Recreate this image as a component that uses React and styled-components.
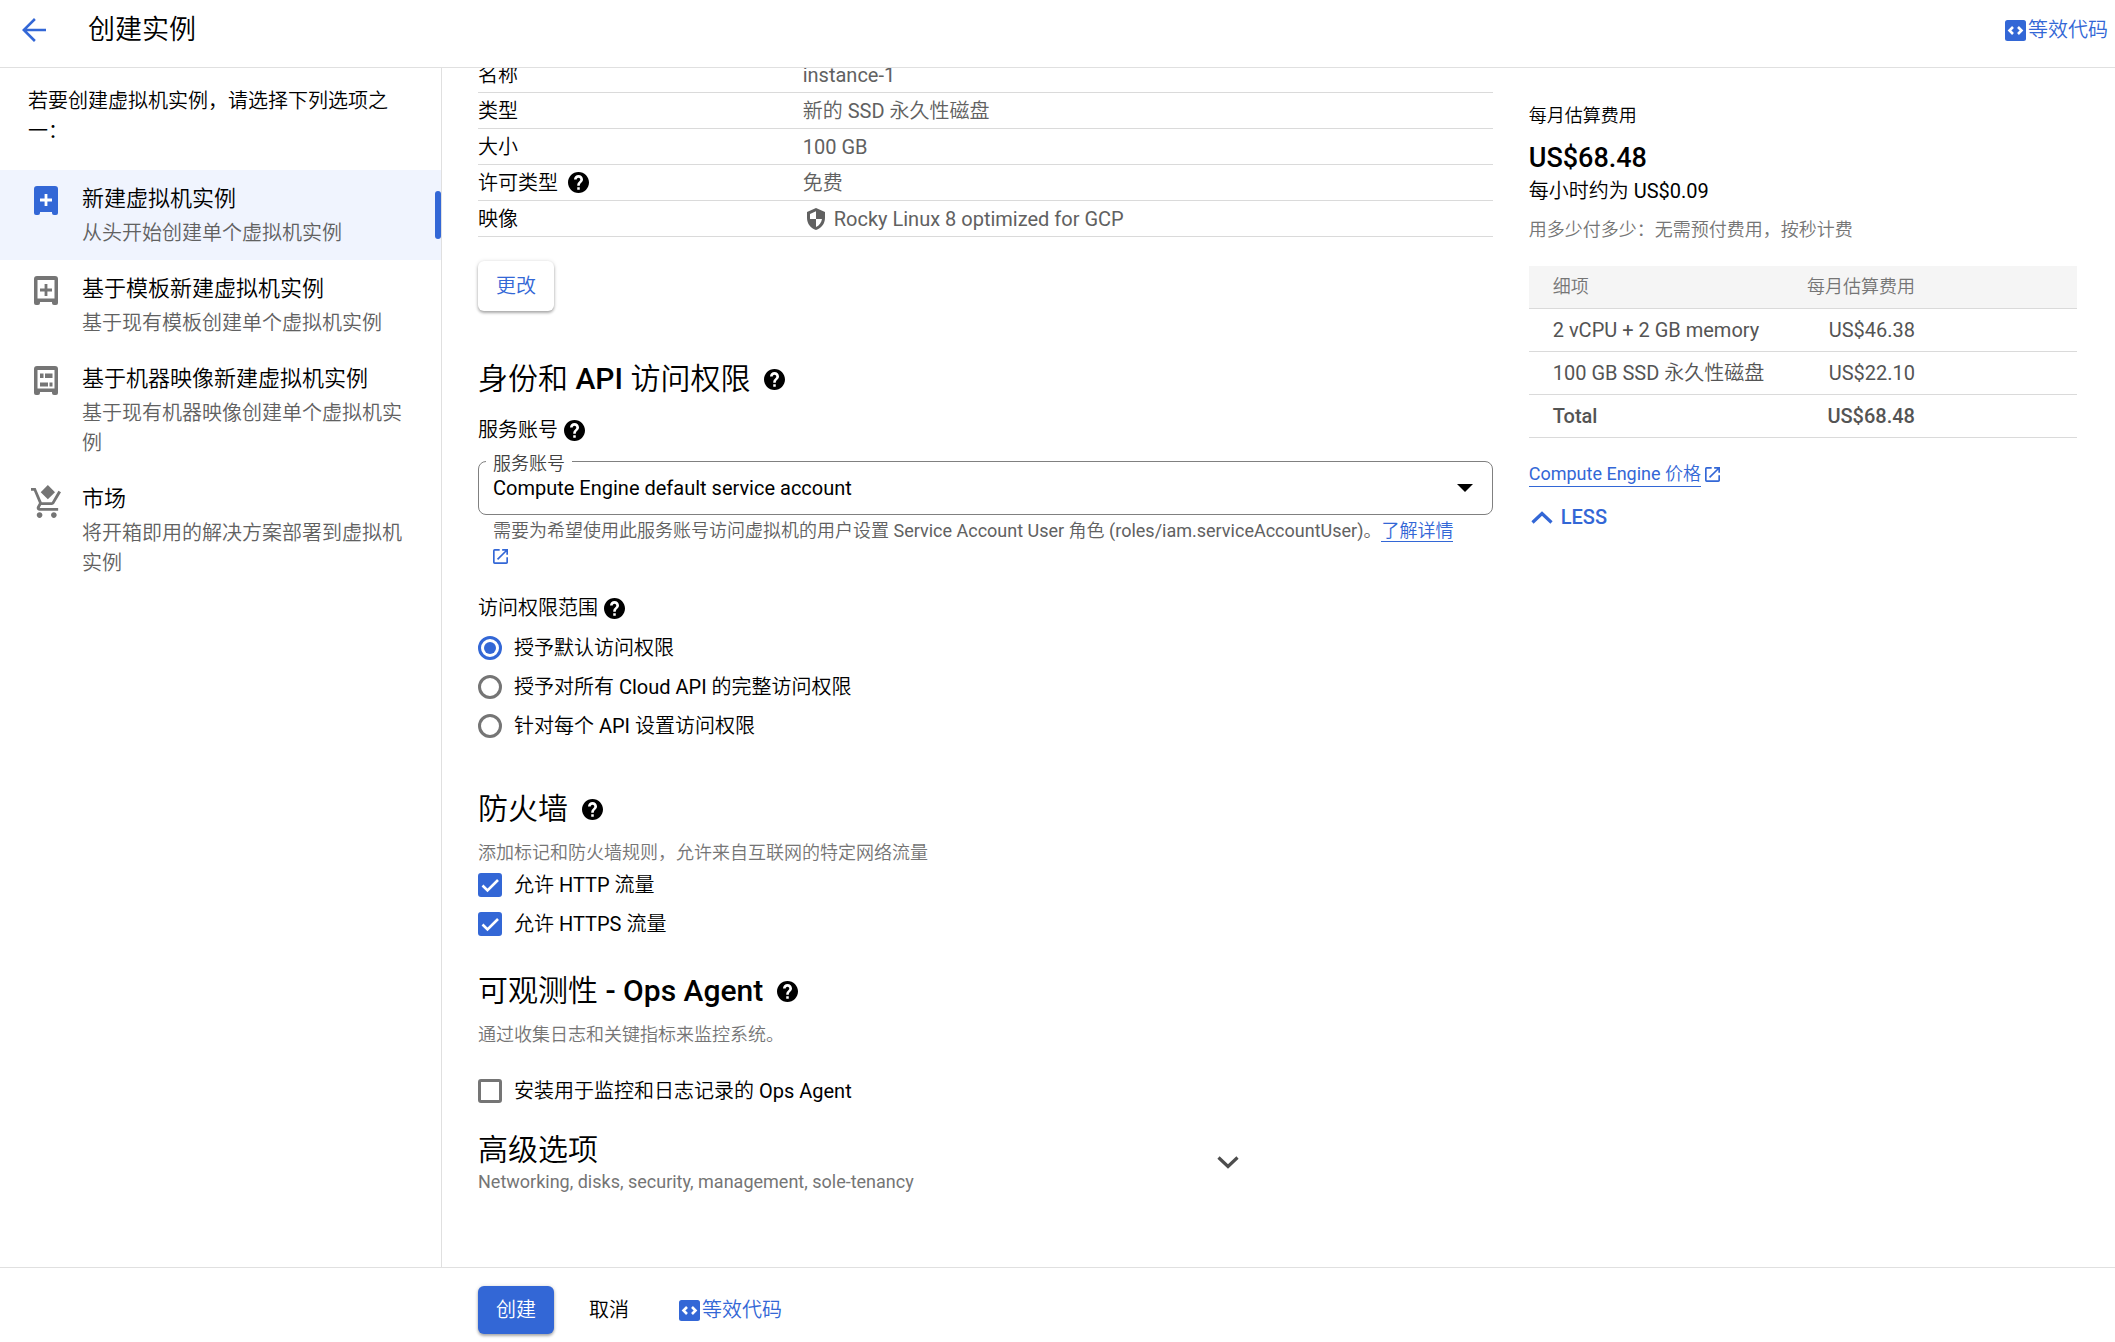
import React, { useLayoutEffect, useRef, useState } from "react";
import styled, { createGlobalStyle } from "styled-components";

const GlobalStyle = createGlobalStyle`
  * {
    box-sizing: border-box;
  }

  body {
    margin: 0;
    background: #fff;
    color: #000;
    font-family: Roboto, "Noto Sans CJK SC DemiLight", "Noto Sans CJK SC", sans-serif;
    font-size: 20px;
    line-height: 30px;
  }

  button, input, select {
    margin: 0;
    font: inherit;
    color: inherit;
  }

  h1, h2, p {
    margin: 0;
  }
`;

const CREATE_OPTIONS = [
  { id: "new", title: "新建虚拟机实例", text: "从头开始创建单个虚拟机实例" },
  {
    id: "template",
    title: "基于模板新建虚拟机实例",
    text: "基于现有模板创建单个虚拟机实例",
  },
  {
    id: "image",
    title: "基于机器映像新建虚拟机实例",
    text: "基于现有机器映像创建单个虚拟机实例",
  },
  { id: "market", title: "市场", text: "将开箱即用的解决方案部署到虚拟机实例" },
];

const SCOPES = [
  { id: "default", label: "授予默认访问权限" },
  { id: "full", label: "授予对所有 Cloud API 的完整访问权限" },
  { id: "custom", label: "针对每个 API 设置访问权限" },
];

const COSTS = [
  { item: "2 vCPU + 2 GB memory", price: "US$46.38" },
  { item: "100 GB SSD 永久性磁盘", price: "US$22.10" },
];

// Icons
const BackIcon = () => (
  <svg width="24" height="24" viewBox="4 4 16 16" fill="currentColor">
    <path d="M20 11.2H7.3l5.9-5.9L12 4l-8 8 8 8 1.2-1.3-5.9-5.9H20z" />
  </svg>
);

const CodeIcon = () => (
  <svg width="21" height="21" viewBox="0 0 21 21">
    <rect width="21" height="21" rx="2.5" fill="currentColor" />
    <path
      d="M8 7l-3.5 3.5L8 14M13 7l3.5 3.5L13 14"
      fill="none"
      stroke="#fff"
      strokeWidth="2.6"
    />
  </svg>
);

const HelpIcon = () => (
  <svg width="21" height="21" viewBox="2 2 20 20" fill="currentColor">
    <path d="M12 2C6.48 2 2 6.48 2 12s4.48 10 10 10 10-4.48 10-10S17.52 2 12 2zm1.2 17h-2.4v-2.4h2.4V19zm2.07-7.55l-.9.92c-.72.73-1.17 1.33-1.17 2.83h-2.4v-.7c0-1.1.45-2.1 1.17-2.83l1.24-1.26c.37-.36.49-.76.49-1.31 0-.9-.8-1.7-1.7-1.7s-1.7.8-1.7 1.7H7.7C7.7 6.69 9.59 4.8 12 4.8s4.3 1.89 4.3 4.3c0 .88-.46 1.78-1.03 2.35z" />
  </svg>
);

const ShieldIcon = () => (
  <svg width="18" height="22" viewBox="3 1 18 22" fill="currentColor">
    <path d="M12 1L3 5v6c0 5.55 3.84 10.74 9 12 5.16-1.26 9-6.45 9-12V5l-9-4zm0 10.99h6c-.5 3.6-2.8 6.7-6 7.9V12H6V7l6-2.7z" />
  </svg>
);

const OpenIcon = () => (
  <svg width="15" height="15" viewBox="3 3 18 18" fill="currentColor">
    <path d="M19 19H5V5h6V3H5a2 2 0 00-2 2v14a2 2 0 002 2h14c1.1 0 2-.9 2-2v-6h-2v6zM14 3v2h3.59l-9.83 9.83 1.41 1.41L19 6.41V10h2V3h-7z" />
  </svg>
);

const ChevronIcon = ({ up }) => (
  <svg width="22" height="13" viewBox="0 0 22 13">
    <path
      d={up ? "M1.5 11.5l9.5-9 9.5 9" : "M1.5 1.5l9.5 9 9.5-9"}
      fill="none"
      stroke="currentColor"
      strokeWidth="3.2"
    />
  </svg>
);

const OptionIcon = ({ id }) => {
  if (id === "market") {
    return (
      <svg width="30" height="33" viewBox="1 -1 21 23" fill="currentColor">
        <path d="M12.8-1l5 5-5 5-5-5zM7 18c-1.1 0-1.99.9-1.99 2S5.9 22 7 22s2-.9 2-2-.9-2-2-2zm10 0c-1.1 0-1.99.9-1.99 2s.89 2 1.99 2 2-.9 2-2-.9-2-2-2zm-9.83-3.25l.03-.12.9-1.63h7.45c.75 0 1.41-.41 1.75-1.03l4.7-7.97L20.2 3l-4.65 8H8.53L4.27 1H1v2h2l3.6 8.59-1.35 2.45c-.16.28-.25.61-.25.96 0 1.1.9 2 2 2h13v-2H7.42c-.13 0-.25-.11-.25-.25z" />
      </svg>
    );
  }
  return (
    <svg width="24" height="30" viewBox="0 0 24 30" fill="currentColor">
      <path d="M3 0h18a3 3 0 013 3v24a2 2 0 01-2 2h-2a2 2 0 01-2-2v-1H6v1a2 2 0 01-2 2H2a2 2 0 01-2-2V3a3 3 0 013-3z" />
      {id !== "new" && <path d="M3.5 4h17v18.5h-17z" fill="#fff" />}
      {id === "image" ? (
        <path d="M6 7.5h3.5V12H6zM11 7.5h7.5V12H11zM6 16.5h8v4H6zM15.5 16.5h3v4h-3z" />
      ) : (
        <path
          d="M12 8v12M6 14h12"
          stroke={id === "new" ? "#fff" : "currentColor"}
          strokeWidth="2.8"
        />
      )}
    </svg>
  );
};

export default function App() {
  const pane = useRef(null);
  const [scope, setScope] = useState("default");
  const [http, setHttp] = useState(true);
  const [https, setHttps] = useState(true);
  const [opsAgent, setOpsAgent] = useState(false);

  // Open the form just past the top of the boot disk table
  useLayoutEffect(() => {
    pane.current.scrollTop = 11;
  }, []);

  return (
    <Page lang="zh-CN">
      <GlobalStyle />
      <TopBar>
        <IconButton type="button" aria-label="返回">
          <BackIcon />
        </IconButton>
        <PageTitle>创建实例</PageTitle>
        <CodeButton type="button">
          <CodeIcon />
          等效代码
        </CodeButton>
      </TopBar>

      <Body>
        <Sidebar>
          <Intro>若要创建虚拟机实例，请选择下列选项之一：</Intro>
          <nav>
            {CREATE_OPTIONS.map((option) => (
              <Option
                key={option.id}
                href={`#${option.id}`}
                $active={option.id === "new"}
              >
                <OptionIconBox $active={option.id === "new"}>
                  <OptionIcon id={option.id} />
                </OptionIconBox>
                <OptionBody>
                  <OptionTitle>{option.title}</OptionTitle>
                  <OptionText>{option.text}</OptionText>
                </OptionBody>
              </Option>
            ))}
          </nav>
        </Sidebar>

        <FormPane ref={pane}>
          <DiskTable>
            <tbody>
              <tr>
                <th scope="row">名称</th>
                <td>instance-1</td>
              </tr>
              <tr>
                <th scope="row">类型</th>
                <td>新的 SSD 永久性磁盘</td>
              </tr>
              <tr>
                <th scope="row">大小</th>
                <td>100 GB</td>
              </tr>
              <tr>
                <th scope="row">
                  <TermLabel>
                    许可类型
                    <HelpIcon />
                  </TermLabel>
                </th>
                <td>免费</td>
              </tr>
              <tr>
                <th scope="row">映像</th>
                <td>
                  <ImageName>
                    <ShieldIcon />
                    Rocky Linux 8 optimized for GCP
                  </ImageName>
                </td>
              </tr>
            </tbody>
          </DiskTable>
          <ChangeButton type="button">更改</ChangeButton>

          <Heading $top={48}>
            身份和 API 访问权限
            <HelpIcon />
          </Heading>
          <Label $top={16}>
            服务账号
            <HelpIcon />
          </Label>
          <SelectField>
            <label htmlFor="account">服务账号</label>
            <select id="account" defaultValue="default">
              <option value="default">
                Compute Engine default service account
              </option>
            </select>
            <svg width="16" height="8" viewBox="0 0 16 8">
              <path d="M0 0h16L8 8z" />
            </svg>
          </SelectField>
          <Helper>
            需要为希望使用此服务账号访问虚拟机的用户设置 Service Account User
            角色 (roles/iam.serviceAccountUser)。
            <Link href="#learn">了解详情</Link> <OpenIcon />
          </Helper>

          <Label $top={26}>
            访问权限范围
            <HelpIcon />
          </Label>
          <Choices $top={5}>
            {SCOPES.map((item) => (
              <Choice key={item.id}>
                <Radio
                  type="radio"
                  name="scope"
                  checked={scope === item.id}
                  onChange={() => setScope(item.id)}
                />
                {item.label}
              </Choice>
            ))}
          </Choices>

          <Heading $top={44}>
            防火墙
            <HelpIcon />
          </Heading>
          <Description $top={12}>
            添加标记和防火墙规则，允许来自互联网的特定网络流量
          </Description>
          <Choices>
            <CheckChoice checked={http} onChange={setHttp}>
              允许 HTTP 流量
            </CheckChoice>
            <CheckChoice checked={https} onChange={setHttps}>
              允许 HTTPS 流量
            </CheckChoice>
          </Choices>

          <Heading $top={28}>
            可观测性 - Ops Agent
            <HelpIcon />
          </Heading>
          <Description $top={12}>通过收集日志和关键指标来监控系统。</Description>
          <Choices $top={24}>
            <CheckChoice checked={opsAgent} onChange={setOpsAgent}>
              安装用于监控和日志记录的 Ops Agent
            </CheckChoice>
          </Choices>

          <Advanced type="button" aria-expanded="false">
            <span>
              <AdvancedTitle>高级选项</AdvancedTitle>
              <AdvancedText>
                Networking, disks, security, management, sole-tenancy
              </AdvancedText>
            </span>
            <ChevronIcon />
          </Advanced>
        </FormPane>

        <CostPane>
          <CostLabel>每月估算费用</CostLabel>
          <Price>US$68.48</Price>
          <p>每小时约为 US$0.09</p>
          <Description $top={12}>
            用多少付多少：无需预付费用，按秒计费
          </Description>
          <CostTable>
            <colgroup>
              <col />
              <col width="30%" />
              <col width="162" />
            </colgroup>
            <thead>
              <tr>
                <th scope="col">细项</th>
                <th scope="col">每月估算费用</th>
                <td />
              </tr>
            </thead>
            <tbody>
              {COSTS.map((cost) => (
                <tr key={cost.item}>
                  <td>{cost.item}</td>
                  <td>{cost.price}</td>
                  <td />
                </tr>
              ))}
            </tbody>
            <tfoot>
              <tr>
                <td>Total</td>
                <td>US$68.48</td>
                <td />
              </tr>
            </tfoot>
          </CostTable>
          <PricingRow>
            <Link href="#pricing">Compute Engine 价格</Link>
            <OpenIcon />
          </PricingRow>
          <LessButton type="button">
            <ChevronIcon up />
            LESS
          </LessButton>
        </CostPane>
      </Body>

      <Footer>
        <CreateButton type="button">创建</CreateButton>
        <CancelButton type="button">取消</CancelButton>
        <CodeButton type="button">
          <CodeIcon />
          等效代码
        </CodeButton>
      </Footer>
    </Page>
  );
}

function CheckChoice({ checked, onChange, children }) {
  return (
    <Choice>
      <CheckStack>
        <Checkbox
          type="checkbox"
          checked={checked}
          onChange={(e) => onChange(e.target.checked)}
        />
        {checked && (
          <svg width="24" height="24" viewBox="0 0 24 24">
            <path
              d="M4.5 12.5l5 5L20 7"
              fill="none"
              stroke="#fff"
              strokeWidth="2.6"
            />
          </svg>
        )}
      </CheckStack>
      {children}
    </Choice>
  );
}

const Page = styled.div`
  display: flex;
  flex-direction: column;
  height: 100vh;
`;

const TopBar = styled.header`
  display: flex;
  flex: none;
  align-items: center;
  padding: 0 7px 7px 22px;
  height: 68px;
  border-bottom: 1px solid #e0e0e0;
`;

const PlainButton = styled.button`
  display: flex;
  align-items: center;
  padding: 0;
  border: 0;
  background: none;
  cursor: pointer;
`;

const IconButton = styled(PlainButton)`
  color: #3367d6;
`;

const PageTitle = styled.h1`
  flex: 1;
  margin-left: 42px;
  font-size: 27px;
  font-weight: 400;
  line-height: 40px;
`;

const CodeButton = styled(PlainButton)`
  gap: 2px;
  color: #3367d6;
`;

const Body = styled.div`
  display: grid;
  grid-template-columns: 442px minmax(0, 16fr) minmax(0, 9fr);
  grid-template-rows: minmax(0, 1fr);
  flex: 1;
  min-height: 0;
`;

const Sidebar = styled.aside`
  border-right: 1px solid #e0e0e0;
`;

const Intro = styled.p`
  padding: 18px 28px 24px;
`;

const Option = styled.a`
  position: relative;
  display: flex;
  gap: 20px;
  padding: 14px 28px 12px 30px;
  background: ${(props) => (props.$active ? "#f0f4fe" : "none")};
  color: inherit;
  text-decoration: none;

  &::after {
    content: "";
    display: ${(props) => (props.$active ? "block" : "none")};
    position: absolute;
    top: 21px;
    right: 0;
    width: 6px;
    height: 48px;
    border-radius: 3px;
    background: #3367d6;
  }
`;

const OptionIconBox = styled.span`
  display: flex;
  flex: none;
  justify-content: center;
  align-items: center;
  width: 32px;
  height: 34px;
  color: ${(props) => (props.$active ? "#3367d6" : "#757575")};
`;

const OptionBody = styled.span`
  display: flex;
  flex-direction: column;
  gap: 4px;
`;

const OptionTitle = styled.span`
  font-size: 22px;
`;

const OptionText = styled.span`
  color: #616161;
`;

const FormPane = styled.main`
  padding: 0 20px 80px 36px;
  overflow-y: auto;
  scrollbar-width: none;
`;

const DiskTable = styled.table`
  width: 100%;
  border-collapse: separate;
  border-spacing: 0;
  table-layout: fixed;

  th,
  td {
    height: 36px;
    padding: 0;
    border-bottom: 1px solid #dadada;
    font-weight: 400;
    text-align: left;
  }

  th {
    width: 32%;
  }

  td {
    color: #616161;
  }
`;

const TermLabel = styled.span`
  display: flex;
  align-items: center;
  gap: 10px;
`;

const ImageName = styled.span`
  display: flex;
  align-items: center;
  gap: 9px;
  padding-left: 4px;
`;

const ChangeButton = styled.button`
  display: block;
  height: 50px;
  margin-top: 24px;
  padding: 0 18px;
  border: 0;
  border-radius: 6px;
  background: #fff;
  box-shadow: 0 2px 3px rgba(0, 0, 0, 0.3), 0 0 4px rgba(0, 0, 0, 0.12);
  color: #3367d6;
`;

const Heading = styled.h2`
  display: flex;
  align-items: center;
  gap: 14px;
  margin-top: ${(props) => props.$top}px;
  font-size: 30px;
  font-weight: 500;
  line-height: 40px;
`;

const Label = styled.div`
  display: flex;
  align-items: center;
  gap: 6px;
  margin-top: ${(props) => props.$top}px;
`;

const SelectField = styled.div`
  position: relative;
  display: grid;
  align-items: center;
  margin-top: 16px;

  label {
    position: absolute;
    top: -9px;
    left: 8px;
    padding: 0 7px;
    background: #fff;
    color: #424242;
    font-size: 18px;
    line-height: 24px;
  }

  select {
    grid-area: 1 / 1;
    width: 100%;
    height: 54px;
    padding: 0 48px 0 14px;
    border: 1px solid #808080;
    border-radius: 8px;
    background: #fff;
    appearance: none;
  }

  svg {
    grid-area: 1 / 1;
    justify-self: end;
    margin-right: 20px;
    pointer-events: none;
  }
`;

const Helper = styled.p`
  margin-top: 4px;
  padding: 0 26px 0 15px;
  color: #616161;
  font-size: 18px;
  line-height: 24px;

  svg {
    color: #3367d6;
    vertical-align: middle;
  }
`;

const Link = styled.a`
  border-bottom: 1px solid #3367d6;
  color: #3367d6;
  text-decoration: none;
`;

const Choices = styled.div`
  display: grid;
  grid-auto-rows: 39px;
  justify-items: start;
  margin-top: ${(props) => props.$top || 0}px;
`;

const Choice = styled.label`
  display: flex;
  align-items: center;
  gap: 12px;
`;

const Radio = styled.input`
  width: 24px;
  height: 24px;
  border: 3px solid #757575;
  border-radius: 50%;
  appearance: none;

  &:checked {
    border-color: #3367d6;
    padding: 3px;
    background: #3367d6 content-box;
  }
`;

const CheckStack = styled.span`
  display: grid;

  > * {
    grid-area: 1 / 1;
  }

  svg {
    pointer-events: none;
  }
`;

const Checkbox = styled.input`
  width: 24px;
  height: 24px;
  border: 3px solid #757575;
  border-radius: 3px;
  appearance: none;

  &:checked {
    border-color: #3367d6;
    background: #3367d6;
  }
`;

const Description = styled.p`
  margin-top: ${(props) => props.$top}px;
  color: #757575;
  font-size: 18px;
  line-height: 24px;
`;

const Advanced = styled(PlainButton)`
  justify-content: space-between;
  width: 75%;
  margin-top: 20px;
  color: #4d4d4d;
  text-align: left;
`;

const AdvancedTitle = styled.span`
  display: block;
  color: #000;
  font-size: 30px;
  font-weight: 500;
  line-height: 40px;
`;

const AdvancedText = styled.span`
  display: block;
  color: #757575;
  font-size: 18px;
  line-height: 24px;
`;

const CostPane = styled.aside`
  padding: 36px 38px 0 16px;
`;

const CostLabel = styled.p`
  font-size: 18px;
  line-height: 24px;
`;

const Price = styled.p`
  margin-top: 12px;
  font-size: 27px;
  font-weight: 500;
  line-height: 36px;
`;

const CostTable = styled.table`
  width: 100%;
  margin-top: 24px;
  border-collapse: separate;
  border-spacing: 0;
  table-layout: fixed;
  color: #545454;

  th,
  td {
    height: 43px;
    padding: 0;
    border-bottom: 1px solid #dadada;
    text-align: right;
    white-space: nowrap;
  }

  th:first-child,
  td:first-child {
    padding-left: 24px;
    text-align: left;
  }

  thead {
    background: #f5f5f5;
    color: #757575;
    font-size: 18px;
  }

  th {
    font-weight: 400;
  }

  tfoot {
    font-weight: 500;
  }
`;

const PricingRow = styled.div`
  display: flex;
  align-items: center;
  gap: 4px;
  margin-top: 24px;
  color: #3367d6;
  font-size: 18px;
  line-height: 24px;
`;

const LessButton = styled(PlainButton)`
  gap: 8px;
  margin-top: 18px;
  padding-left: 2px;
  color: #3367d6;
  font-size: 20px;
  font-weight: 500;
  line-height: 24px;
`;

const Footer = styled.footer`
  display: flex;
  flex: none;
  align-items: center;
  height: 75px;
  padding: 10px 0 0 478px;
  border-top: 1px solid #e0e0e0;
`;

const CreateButton = styled.button`
  height: 48px;
  padding: 0 18px;
  border: 0;
  border-radius: 6px;
  background: #3367d6;
  box-shadow: 0 2px 3px rgba(0, 0, 0, 0.3), 0 0 4px rgba(0, 0, 0, 0.12);
  color: #fff;
`;

const CancelButton = styled(PlainButton)`
  margin: 0 50px 0 35px;
`;
